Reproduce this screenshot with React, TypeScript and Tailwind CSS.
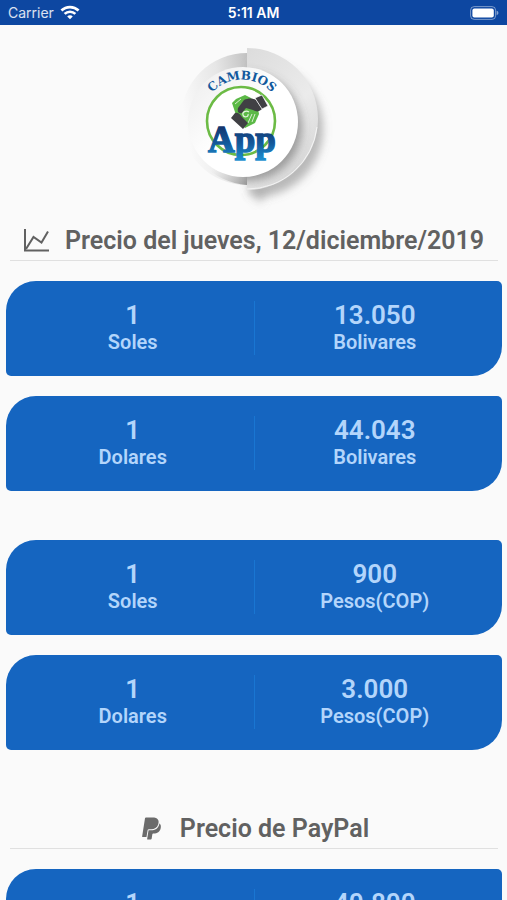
import type { ReactNode } from 'react';
import { FaPaypal } from 'react-icons/fa';

interface Rate {
  from: string;
  amount: string;
  to: string;
}

const localRates: Rate[] = [
  { from: 'Soles', amount: '13.050', to: 'Bolivares' },
  { from: 'Dolares', amount: '44.043', to: 'Bolivares' },
];

const pesoRates: Rate[] = [
  { from: 'Soles', amount: '900', to: 'Pesos(COP)' },
  { from: 'Dolares', amount: '3.000', to: 'Pesos(COP)' },
];

const paypalRates: Rate[] = [{ from: 'Dolares', amount: '40.800', to: 'Bolivares' }];

function StatusBar() {
  return (
    <div className="grid h-[25px] grid-cols-3 items-center bg-[#0d47a1] px-2 font-['Inter',sans-serif] text-sm text-white">
      <div className="flex items-center gap-1.5 text-white/85">
        <span>Carrier</span>
        <svg width="20" height="15" viewBox="0 0 18 14" fill="none" stroke="#fff" strokeWidth="2.5">
          <path d="M1 5.2C5.5 0.8 12.5 0.8 17 5.2" />
          <path d="M4 8.3C6.8 5.6 11.2 5.6 14 8.3" />
          <path d="M6.4 10.8C7.8 9.3 10.2 9.3 11.6 10.8L9 13.4Z" fill="#fff" stroke="none" />
        </svg>
      </div>
      <span className="text-center font-semibold">5:11 AM</span>
      <svg className="justify-self-end" width="30" height="14" viewBox="0 0 30 14">
        <rect x="1.6" y="0.6" width="25" height="12.8" rx="3.6" fill="none" stroke="#fff" strokeOpacity="0.45" />
        <rect x="3.4" y="2.4" width="21.4" height="9.2" rx="2" fill="#fff" />
        <path d="M27.6 4.8C30 5.4 30 8.6 27.6 9.2Z" fill="#fff" fillOpacity="0.5" />
      </svg>
    </div>
  );
}

function Logo() {
  return (
    <svg width="160" height="175" viewBox="-1 0 160 175" role="img" aria-label="Cambios App">
      <defs>
        <linearGradient id="leftDisc" x1="1" y1="0" x2="0" y2="0.35">
          <stop offset="0" stopColor="#c2c2c2" />
          <stop offset="0.45" stopColor="#e6e6e6" />
          <stop offset="1" stopColor="#fafafa" />
        </linearGradient>
        <linearGradient id="leftShade" x1="1" y1="1" x2="0.2" y2="0.4">
          <stop offset="0" stopColor="#9a9a9a" />
          <stop offset="0.6" stopColor="#d0d0d0" stopOpacity="0" />
        </linearGradient>
        <linearGradient id="rightDisc" x1="0" y1="0" x2="0.5" y2="1">
          <stop offset="0" stopColor="#dcdcdc" />
          <stop offset="0.6" stopColor="#ebebeb" />
          <stop offset="1" stopColor="#d8d8d8" />
        </linearGradient>
        <linearGradient id="face" x1="0" y1="0" x2="0.5" y2="0.5">
          <stop offset="0" stopColor="#ececec" />
          <stop offset="1" stopColor="#ffffff" />
        </linearGradient>
        <linearGradient id="ink" x1="0" y1="0" x2="0" y2="1">
          <stop offset="0.2" stopColor="#12366f" />
          <stop offset="0.6" stopColor="#135a9c" />
          <stop offset="1" stopColor="#1d8fd0" />
        </linearGradient>
        <filter id="soft" x="-30%" y="-30%" width="160%" height="160%">
          <feGaussianBlur stdDeviation="4" />
        </filter>
        <clipPath id="rightHalf">
          <path d="M72 13A71 71 0 0 1 72 155Z" />
        </clipPath>
      </defs>

      <path d="M72 18A66 66 0 0 0 72 150Z" fill="url(#leftDisc)" />
      <path d="M72 84H10A66 66 0 0 0 72 150Z" fill="url(#leftShade)" />
      <path d="M76 26A68 68 0 0 1 84 162L74 158Z" fill="#777" fillOpacity="0.5" filter="url(#soft)" />
      <path d="M72 155L86 170L92 154Z" fill="#888" fillOpacity="0.3" filter="url(#soft)" />
      <path d="M72 13A71 71 0 0 1 72 155Z" fill="url(#rightDisc)" />
      <path d="M72 154A70 70 0 0 0 142 92" fill="none" stroke="#fff" strokeOpacity="0.7" />
      <g clipPath="url(#rightHalf)">
        <circle cx="73" cy="92" r="54" fill="#555" fillOpacity="0.5" filter="url(#soft)" />
      </g>
      <circle cx="68" cy="87" r="55" fill="url(#face)" />
      <circle cx="66" cy="86" r="34" fill="#fff" stroke="#6cbb45" strokeWidth="2.6" />

      {/* handshake over a bank note */}
      <path d="M57 68L61 64L70 60L76 63L83 74L84 79L80 88L70 93L64 87L60 77Z" fill="#5cb947" />
      <path d="M60 69L66 64M77 79L73 88M80 79L77 87" stroke="#d9f0d0" fill="none" />
      <path d="M63 73L69 65C73 63 78 63 81 65L87 74C84 77 81 77 78 75L71 73L67 78C64 79 62 77 63 73Z" fill="#404044" />
      <path d="M80 63L87 60L93 71L87 74Z" fill="#404044" stroke="#fff" strokeWidth="0.7" />
      <path d="M56 83L60 78C63 77 65 79 67 82L73 88L68 94Z" fill="#404044" />
      <path d="M74 77C71 75 67 77 68 80C69 83 74 82 73 79" fill="none" stroke="#e4f5dd" strokeWidth="1.2" />

      <path id="nameArc" d="M31 66A41 41 0 0 1 103 66" fill="none" />
      <text className="font-['DejaVu_Serif',serif] font-bold" fontSize="12" fill="#12599d" textAnchor="middle">
        <textPath href="#nameArc" startOffset="50%">
          CAMBIOS
        </textPath>
      </text>
      <text
        x="67"
        y="117"
        className="font-['Liberation_Serif',serif] font-bold"
        fontSize="37"
        fill="url(#ink)"
        stroke="url(#ink)"
        strokeWidth="1.4"
        textAnchor="middle"
      >
        App
      </text>
    </svg>
  );
}

function ChartIcon() {
  return (
    <svg width="25" height="23" viewBox="0 0 25 23" fill="none" stroke="#616161" strokeWidth="2">
      <path d="M1 0V21.5H25" />
      <path d="M2 20L9.5 8L17.5 13.5L24 2.5" />
    </svg>
  );
}

function SectionTitle({ icon, children }: { icon: ReactNode; children: ReactNode }) {
  return (
    <h2 className="mx-1 flex h-10 items-center justify-center gap-4 border-b border-[#e0e0e0] text-[25px] font-semibold text-[#616161]">
      {icon}
      <span>{children}</span>
    </h2>
  );
}

function Amount({ value, currency }: { value: string; currency: string }) {
  return (
    <div className="text-center font-semibold text-[#b3d5fb]">
      <p className="text-[26px] leading-[28px]">{value}</p>
      <p className="text-[20px] leading-[26px]">{currency}</p>
    </div>
  );
}

function RateCard({ rate }: { rate: Rate }) {
  return (
    <div className="grid grid-cols-2 rounded-[5px] rounded-tl-[30px] rounded-br-[30px] bg-[#1565c0] pt-5 pr-[7px] pb-[21px] pl-1.5">
      <Amount value="1" currency={rate.from} />
      <div className="border-l border-[#1976d2]">
        <Amount value={rate.amount} currency={rate.to} />
      </div>
    </div>
  );
}

function RateList({ rates }: { rates: Rate[] }) {
  return (
    <div className="flex flex-col gap-5">
      {rates.map((rate) => (
        <RateCard key={rate.from} rate={rate} />
      ))}
    </div>
  );
}

export default function App() {
  return (
    <div className="h-screen overflow-x-hidden overflow-y-auto bg-[#fafafa] font-['Roboto',sans-serif] [scrollbar-width:none]">
      <StatusBar />
      <main className="pr-[5px] pl-1.5">
        <div className="flex justify-center pt-2.5">
          <Logo />
        </div>
        <div className="pt-[11px]">
          <SectionTitle icon={<ChartIcon />}>Precio del jueves, 12/diciembre/2019</SectionTitle>
        </div>
        <div className="flex flex-col gap-[49px] pt-5">
          <RateList rates={localRates} />
          <RateList rates={pesoRates} />
        </div>
        <div className="pt-[59px] pb-5">
          <SectionTitle icon={<FaPaypal className="text-[#6b6b6b]" />}>Precio de PayPal</SectionTitle>
        </div>
        <RateList rates={paypalRates} />
      </main>
    </div>
  );
}
